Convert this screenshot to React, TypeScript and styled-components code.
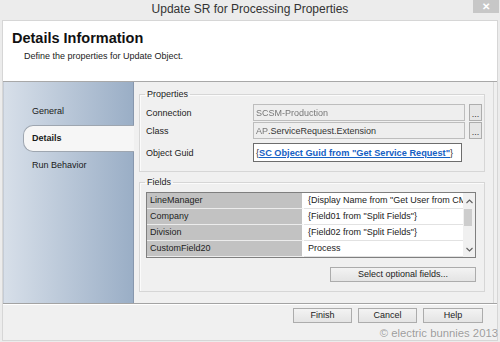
import React from "react";
import styled, { createGlobalStyle } from "styled-components";

const GlobalStyle = createGlobalStyle`
  html, body {
    margin: 0;
    padding: 0;
  }
  body {
    width: 500px;
    height: 342px;
    overflow: hidden;
    background: #ececec;
    font-family: "Liberation Sans", Arial, sans-serif;
    font-size: 9px;
    color: #1e1e1e;
  }
`;

const Window = styled.div`
  position: relative;
  width: 500px;
  height: 342px;
  display: flex;
  flex-direction: column;
  background: #ececec;
`;

const TitleBar = styled.div`
  height: 20px;
  display: grid;
  grid-template-columns: 1fr auto 1fr;
  align-items: start;
`;

const Title = styled.div`
  grid-column: 2;
  font-size: 12px;
  line-height: 19px;
  color: #333;
`;

const CloseButton = styled.div`
  grid-column: 3;
  justify-self: end;
  width: 26px;
  height: 13px;
  margin-right: 1px;
  background: #c7c7c7;
  color: #fff;
  display: flex;
  align-items: center;
  justify-content: center;
  font-size: 10px;
  font-weight: bold;
  line-height: 1;
`;

const Frame = styled.div`
  flex: 1;
  margin: 0 2px 1px 2px;
  border: 1px solid #d6d6d6;
  background: #f0f0f0;
  display: flex;
  flex-direction: column;
`;

const Header = styled.header`
  height: 61px;
  box-sizing: border-box;
  background: #fff;
  border-bottom: 1px solid #a8a8a8;
  padding: 9px 0 0 9px;
`;

const Heading = styled.h1`
  margin: 0;
  font-size: 14.5px;
  line-height: 17px;
  font-weight: bold;
  color: #111;
`;

const Subtitle = styled.p`
  margin: 4px 0 0 12px;
  line-height: 11px;
  color: #222;
`;

const Body = styled.div`
  height: 221px;
  display: flex;
  border-bottom: 1px solid #a3a3a3;
  box-shadow: 0 1px 0 #fff;
`;

const Sidebar = styled.nav`
  flex: 0 0 129px;
  padding-top: 16px;
  background: linear-gradient(to right, #d7dfe9, #9aaec6);
  border-right: 1px solid #8797ad;
  border-left: 1px solid #c5ccd6;
  display: flex;
  flex-direction: column;
`;

const NavItem = styled.div<{ $active?: boolean }>`
  height: 27px;
  line-height: 25px;
  margin: 0 -1px 0 19px;
  padding-left: 8px;
  box-sizing: border-box;
  border: 1px solid ${(p) => (p.$active ? "#9ea6b0" : "transparent")};
  border-right: none;
  border-radius: 10px 0 0 10px;
  background: ${(p) => (p.$active ? "#f6f6f6" : "transparent")};
  font-weight: ${(p) => (p.$active ? "bold" : "normal")};
  color: #1a1a1a;
  position: relative;
`;

const Content = styled.main`
  flex: 1;
  min-width: 0;
  padding: 7px 12px 0 5px;
  box-shadow: inset -3px 0 0 #f0f0f0, inset -4px 0 0 #d9d9d9;
`;

const Group = styled.fieldset<{ $spaced?: boolean }>`
  margin: ${(p) => (p.$spaced ? "5px" : "0")} 0 0 0;
  padding: 4px 2px 9px 6px;
  border: 1px solid #d6d6d6;
  box-shadow: inset 1px 1px 0 #fbfbfb;
  min-width: 0;

  legend {
    padding: 0 2px;
    margin-left: -1px;
    line-height: 11px;
    color: #222;
  }
`;

const PropRow = styled.div<{ $top?: number; $height: number }>`
  display: grid;
  grid-template-columns: 103px 212px 13px;
  column-gap: 4px;
  align-items: center;
  height: ${(p) => p.$height}px;
  margin-top: ${(p) => p.$top ?? 0}px;
`;

const Label = styled.span`
  color: #222;
`;

const TextBox = styled.div<{ $live?: boolean }>`
  height: 100%;
  width: ${(p) => (p.$live ? "209px" : "100%")};
  box-sizing: border-box;
  border: 1px solid ${(p) => (p.$live ? "#6d6d6d" : "#bdbdbd")};
  background: ${(p) => (p.$live ? "#fff" : "#eeeeee")};
  padding-left: 2px;
  display: flex;
  align-items: center;
  white-space: nowrap;
  overflow: hidden;
  color: #333;
`;

const Blurred = styled.span`
  filter: blur(0.7px);
  color: #777;
`;

const GuidLink = styled.span`
  color: #1560c4;
  font-size: 9.2px;
  font-weight: bold;
  text-decoration: underline;
`;

const DotsButton = styled.div`
  height: 100%;
  box-sizing: border-box;
  border: 1px solid #adadad;
  background: #e6e6e6;
  display: flex;
  align-items: flex-end;
  justify-content: center;
  line-height: 12px;
  font-size: 9px;
  color: #333;
`;

const FieldGrid = styled.div`
  width: 328px;
  display: grid;
  grid-template-columns: 1fr 12px;
  border: 1px solid #7f7f7f;
  background: #fff;
`;

const FieldRows = styled.div`
  display: flex;
  flex-direction: column;
  min-width: 0;
`;

const FieldRow = styled.div`
  display: grid;
  grid-template-columns: 157px 1fr;
  height: 16px;
`;

const KeyCell = styled.div`
  background: #c2c2c2;
  border-bottom: 1px solid #ececec;
  border-right: 2px solid #fff;
  padding-left: 3px;
  line-height: 15px;
  white-space: nowrap;
  color: #222;
`;

const ValueCell = styled.div`
  border-bottom: 1px solid #e2e2e2;
  padding-left: 4px;
  line-height: 15px;
  white-space: nowrap;
  overflow: hidden;
  color: #222;
`;

const ScrollBar = styled.div`
  background: #f0f0f0;
  display: flex;
  flex-direction: column;
`;

const ScrollArrow = styled.div`
  height: 16px;
  display: flex;
  align-items: center;
  justify-content: center;
`;

const ScrollTrack = styled.div`
  flex: 1;
`;

const ScrollThumb = styled.div`
  width: 8px;
  height: 17px;
  margin-left: 1px;
  background: #cdcdcd;
`;

const Actions = styled.div`
  display: flex;
  justify-content: flex-end;
  margin: 9px 0 0 0;
  width: 330px;
`;

const Button = styled.button<{ $width: number }>`
  width: ${(p) => p.$width}px;
  height: 15px;
  padding: 0;
  border: 1px solid #acacac;
  background: linear-gradient(#f3f3f3, #e4e4e4);
  font-family: inherit;
  font-size: 9px;
  line-height: 13px;
  color: #222;
`;

const Footer = styled.footer`
  flex: 1;
  display: flex;
  justify-content: flex-end;
  align-items: flex-start;
  gap: 6px;
  padding: 4px 14px 0 0;
`;

const Watermark = styled.div`
  position: absolute;
  right: 2px;
  bottom: 2px;
  font-family: "Liberation Sans", Arial, sans-serif;
  font-size: 11.3px;
  line-height: 13px;
  color: #9c9c9c;
  text-shadow: 0 0 1px #fff;
`;

const Chevron = ({ down }: { down?: boolean }) => (
  <svg width="7" height="5" viewBox="0 0 7 5">
    <polyline
      points={down ? "0.5,1 3.5,4 6.5,1" : "0.5,4 3.5,1 6.5,4"}
      fill="none"
      stroke="#5f5f5f"
      strokeWidth="1.1"
    />
  </svg>
);

const fields = [
  { key: "LineManager", value: '{Display Name from "Get User from CMDB"}' },
  { key: "Company", value: '{Field01 from "Split Fields"}' },
  { key: "Division", value: '{Field02 from "Split Fields"}' },
  { key: "CustomField20", value: "Process" },
];

const App = () => {
  return (
    <Window>
      <GlobalStyle />
      <TitleBar>
        <Title>Update SR for Processing Properties</Title>
        <CloseButton>✕</CloseButton>
      </TitleBar>

      <Frame>
        <Header>
          <Heading>Details Information</Heading>
          <Subtitle>Define the properties for Update Object.</Subtitle>
        </Header>

        <Body>
          <Sidebar>
            <NavItem>General</NavItem>
            <NavItem $active>Details</NavItem>
            <NavItem>Run Behavior</NavItem>
          </Sidebar>

          <Content>
            <Group>
              <legend>Properties</legend>
              <PropRow $height={17}>
                <Label>Connection</Label>
                <TextBox>
                  <Blurred>SCSM-Production</Blurred>
                </TextBox>
                <DotsButton>...</DotsButton>
              </PropRow>
              <PropRow $height={17} $top={1}>
                <Label>Class</Label>
                <TextBox>
                  <Blurred>AP</Blurred>.ServiceRequest.Extension
                </TextBox>
                <DotsButton>...</DotsButton>
              </PropRow>
              <PropRow $height={19} $top={4}>
                <Label>Object Guid</Label>
                <TextBox $live>
                  {"{"}
                  <GuidLink>SC Object Guid from "Get Service Request"</GuidLink>
                  {"}"}
                </TextBox>
              </PropRow>
            </Group>

            <Group $spaced>
              <legend>Fields</legend>
              <FieldGrid>
                <FieldRows>
                  {fields.map((f) => (
                    <FieldRow key={f.key}>
                      <KeyCell>{f.key}</KeyCell>
                      <ValueCell>{f.value}</ValueCell>
                    </FieldRow>
                  ))}
                </FieldRows>
                <ScrollBar>
                  <ScrollArrow>
                    <Chevron />
                  </ScrollArrow>
                  <ScrollTrack>
                    <ScrollThumb />
                  </ScrollTrack>
                  <ScrollArrow>
                    <Chevron down />
                  </ScrollArrow>
                </ScrollBar>
              </FieldGrid>
              <Actions>
                <Button $width={146}>Select optional fields...</Button>
              </Actions>
            </Group>
          </Content>
        </Body>

        <Footer>
          <Button $width={59}>Finish</Button>
          <Button $width={59}>Cancel</Button>
          <Button $width={60}>Help</Button>
        </Footer>
      </Frame>

      <Watermark>© electric bunnies 2013</Watermark>
    </Window>
  );
};

export default App;
